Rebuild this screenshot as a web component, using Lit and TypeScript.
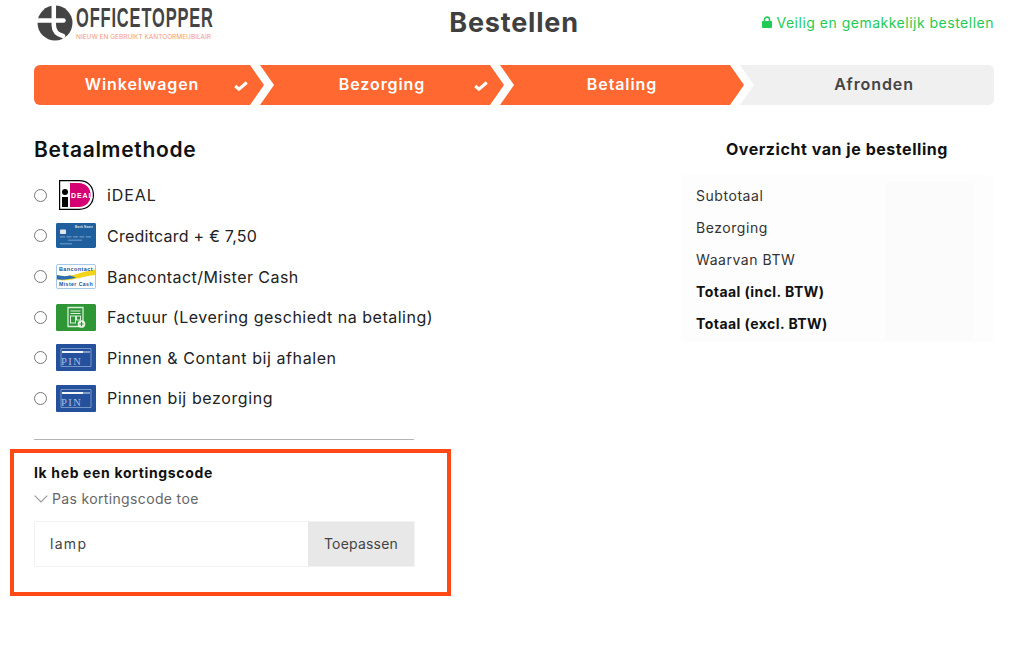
import { LitElement, html, css } from "lit";
import { customElement } from "lit/decorators.js";

const check = html`<svg class="check" viewBox="0 0 14 10"><path d="M1.200 5 5 8.200 12.800 1.500" fill="none" stroke="#fff" stroke-width="3"/></svg>`;

const pin = html`<svg class="pay" viewBox="0 0 40 27"><rect width="40" height="27" rx="1" fill="#24509c"/><path d="M5 4.500h30v18H5z" fill="none" stroke="#8ea7d2" stroke-width=".8"/><rect x="6" y="7" width="21" height="2" fill="#f2f5fb"/><rect x="27" y="7" width="7" height="2" fill="#7f9bcc"/><text x="5" y="20.500" font-family="Liberation Serif" font-size="10.500" letter-spacing="1.500" fill="#a9bce0">PIN</text></svg>`;

const icons = [
  html`<svg class="pay tall" viewBox="0 0 40 30"><path d="M3.600.6H23C32.500.6 37.400 7 37.400 15S32.500 29.400 23 29.400H3.600Z" fill="#fff" stroke="#000" stroke-width="1.200"/><path d="M14 3h8.500C30 3 34.600 8 34.600 15S30 27 22.500 27H14Z" fill="#d50072"/><circle cx="9" cy="12" r="3" fill="#000"/><rect x="6" y="17" width="6" height="10" fill="#000"/><text x="15" y="17.500" font-family="Liberation Sans" font-weight="700" font-size="7" fill="#fff">DEAL</text></svg>`,
  html`<svg class="pay card" viewBox="0 0 40 27" preserveAspectRatio="none"><rect width="40" height="27" rx="1.500" fill="#1f5f9e"/><text x="19" y="5" font-family="Liberation Sans" font-weight="700" font-size="3" fill="#dfeaf5" textLength="18" lengthAdjust="spacingAndGlyphs">Bank Name</text><rect x="4" y="7" width="6" height="5" rx=".8" fill="#dfe6ec"/><path d="M4 15h32" stroke="#7fa6cc" stroke-width="1" stroke-dasharray="5 1.500"/><rect x="12" y="18" width="14" height="1" fill="#7fa6cc"/><rect x="4" y="22" width="12" height="1" fill="#7fa6cc"/></svg>`,
  html`<svg class="pay card" viewBox="0 0 40 27" preserveAspectRatio="none"><rect x=".5" y=".5" width="39" height="26" rx="1.500" fill="#fff" stroke="#9fc6e6"/><path d="M1 12C14 16 25 8 39 6v6C26 13 15 20 1 17Z" fill="#f4d31a"/><path d="M1 12C6 13.500 10 13.500 14 12.500L20 14.500C14 16.500 7 17.500 1 16.500Z" fill="#2a6db5"/><text x="3" y="7.500" font-family="Liberation Sans" font-weight="700" font-size="5.500" fill="#17509a" textLength="34" lengthAdjust="spacingAndGlyphs">Bancontact</text><text x="3" y="23.500" font-family="Liberation Sans" font-weight="700" font-size="5.500" fill="#17509a" textLength="34" lengthAdjust="spacingAndGlyphs">Mister Cash</text></svg>`,
  html`<svg class="pay" viewBox="0 0 40 27"><rect width="40" height="27" rx="1.500" fill="#2e9634"/><path d="M12 3.500h15v19H12z" fill="none" stroke="#d8efd9" stroke-width="1.300"/><path d="M14.500 7h10M14.500 9.500h10" stroke="#d8efd9" stroke-width="1.200"/><rect x="14.500" y="12" width="5" height="7" fill="none" stroke="#d8efd9"/><rect x="20.500" y="12" width="4" height="4" fill="none" stroke="#d8efd9"/><circle cx="25.500" cy="20" r="3.800" fill="#eaf6ea"/><path d="M23.300 20h4.400M25.500 17.800v4.400" stroke="#2e9634" stroke-width="1.100"/></svg>`,
  pin,
  pin,
];

const methods: [string, number][] = [
  ["iDEAL", 0.9],
  ["Creditcard + € 7,50", 0.25],
  ["Bancontact/Mister Cash", 0.45],
  ["Factuur (Levering geschiedt na betaling)", 0.5],
  ["Pinnen & Contant bij afhalen", 0.58],
  ["Pinnen bij bezorging", 0.6],
];

const summary: [string, boolean][] = [
  ["Subtotaal", false],
  ["Bezorging", false],
  ["Waarvan BTW", false],
  ["Totaal (incl. BTW)", true],
  ["Totaal (excl. BTW)", true],
];

@customElement("app-root")
export class AppRoot extends LitElement {
  static styles = css`
    :host {
      display: block;
      width: 1027px;
      height: 652px;
      background: #fff;
      font-family: "Inter", "Liberation Sans", sans-serif;
      color: #222;
      overflow: hidden;
    }
    .page {
      padding: 0 33px 0 34px;
    }
    .top {
      display: grid;
      grid-template-columns: 1fr auto 1fr;
      align-items: center;
      height: 46px;
    }
    .logo {
      display: flex;
      align-items: flex-start;
      gap: 3px;
      padding: 5px 0 0 3px;
      align-self: start;
    }
    .logo svg {
      width: 36px;
      height: 36px;
      flex: none;
    }
    .wordmark {
      display: flex;
      flex-direction: column;
    }
    .wm-big {
      font: 700 24px/27px "Liberation Sans", sans-serif;
      color: #444;
      transform: scale(0.685, 1.130);
      transform-origin: left center;
      white-space: nowrap;
      width: 137px;
      margin-top: -0.800px;
      letter-spacing: 1.250px;
    }
    .wm-small {
      font: 400 6.500px/8px "Inter", sans-serif;
      color: #f79a78;
      white-space: nowrap;
      margin: 2.100px 0 0 0;
    }
    h1 {
      margin: 0;
      font-size: 27px;
      font-weight: 700;
      color: #404040;
      line-height: 46px;
      letter-spacing: 0.800px;
    }
    .safe {
      justify-self: end;
      display: flex;
      align-items: center;
      gap: 4px;
      padding-bottom: 2px;
      font-size: 14px;
      letter-spacing: 0.500px;
      color: #1ecb55;
    }
    .safe svg {
      width: 10px;
      height: 12px;
    }
    .steps {
      margin-top: 19px;
      display: grid;
      grid-template-columns: 216px 240px 240px 1fr;
      height: 40px;
      border-radius: 6px;
      overflow: hidden;
      background: #f0f0f0;
    }
    .step {
      position: relative;
      display: flex;
      align-items: center;
      justify-content: center;
      box-sizing: border-box;
      padding-bottom: 2px;
      font-size: 16px;
      font-weight: 600;
      letter-spacing: 0.900px;
      color: #fff;
      background: #ff6831;
    }
    .step.after {
      padding-left: 24px;
    }
    .step.off {
      background: #f0f0f0;
      color: #444;
    }
    .arrow {
      position: absolute;
      top: 0;
      height: 40px;
      width: 24px;
      right: -24px;
      z-index: 1;
    }
    .check {
      position: absolute;
      width: 14px;
      height: 10px;
      right: 2px;
      top: 16px;
    }
    .cols {
      display: flex;
      justify-content: space-between;
      margin-top: 32px;
    }
    .left {
      width: 380px;
    }
    h2 {
      margin: 0;
      font-size: 21px;
      line-height: 26px;
      font-weight: 600;
      color: #111;
      letter-spacing: 0.700px;
    }
    .methods {
      margin: 12.100px 0 0;
      padding: 0;
      list-style: none;
    }
    .methods li {
      display: flex;
      align-items: center;
      height: 40.600px;
      font-size: 16px;
      color: #222;
      white-space: nowrap;
    }
    input[type="radio"] {
      width: 13px;
      height: 13px;
      margin: 0 9px 0 0;
      flex: none;
    }
    .pay {
      width: 40px;
      height: 27px;
      flex: none;
      margin-right: 11px;
    }
    .pay.tall {
      height: 30px;
    }
    .pay.card {
      height: 25px;
    }
    .rule {
      height: 1px;
      background: #b4b4b4;
      margin-top: 19.900px;
    }
    .coupon {
      margin: 9px 0 0 -24px;
      width: 441px;
      height: 147px;
      box-sizing: border-box;
      border: 4px solid #ff4a17;
      padding: 10px 20px 0;
    }
    .coupon h3 {
      margin: 0;
      font-size: 14px;
      line-height: 20px;
      font-weight: 700;
      color: #111;
      letter-spacing: 0.650px;
    }
    .toggle {
      display: flex;
      align-items: center;
      gap: 4px;
      margin-top: 6px;
      font-size: 14px;
      line-height: 20px;
      color: #666;
      letter-spacing: 0.350px;
    }
    .toggle svg {
      width: 14px;
      height: 8px;
    }
    .field {
      display: flex;
      margin-top: 12px;
      height: 46px;
      width: 381px;
      box-sizing: border-box;
      border: 1px solid #f2f2f2;
    }
    .field .val {
      flex: 1;
      display: flex;
      align-items: center;
      padding-left: 15px;
      font-size: 14px;
      color: #444;
      letter-spacing: 1.300px;
    }
    .field .btn {
      width: 106px;
      display: flex;
      align-items: center;
      justify-content: center;
      background: #e8e8e8;
      font-size: 14px;
      color: #444;
      letter-spacing: 0.200px;
    }
    .right {
      width: 312px;
      margin-right: 1px;
    }
    .right h2 {
      font-size: 16px;
      line-height: 24px;
      font-weight: 700;
      text-align: center;
      color: #111;
      letter-spacing: 0.550px;
    }
    .box {
      margin-top: 14px;
      height: 168px;
      box-sizing: border-box;
      background: #fdfdfd;
      border-radius: 4px;
      padding: 8px 20px 3px 15px;
      display: grid;
      grid-template-columns: 189px 88px;
    }
    .labels {
      font-size: 14px;
      margin-top: -3px;
    }
    .labels div {
      height: 32px;
      line-height: 32px;
      color: #333;
      white-space: nowrap;
      letter-spacing: 0.550px;
    }
    .labels div.b {
      font-weight: 700;
      color: #111;
      letter-spacing: 0.450px;
    }
    .vals {
      background: #fbfbfb;
    }
  `;

  private step(label: string, done: boolean, after: boolean) {
    return html`<div class="step ${after ? "after" : ""}">
      ${label}${done ? check : ""}
      <svg class="arrow" viewBox="0 0 24 40" aria-hidden="true">
        <path d="M0 0H10L24 20 10 40H0Z" fill="#fff"/>
        <path d="M0 0 14 20 0 40Z" fill="#ff6831"/>
      </svg>
    </div>`;
  }

  render() {
    return html`<div class="page">
      <header class="top">
        <div class="logo">
          <svg viewBox="0 0 36 36">
            <circle cx="18" cy="18" r="17.500" fill="#444"/>
            <path d="M0 15.500H26.500" stroke="#fff" stroke-width="4.500" stroke-linecap="round" fill="none"/>
            <path d="M16.800 0V20C16.800 26 20 29.500 26 31" stroke="#fff" stroke-width="4.500" stroke-linecap="round" fill="none"/>
          </svg>
          <div class="wordmark">
            <div class="wm-big">OFFICETOPPER</div>
            <div class="wm-small">NIEUW EN GEBRUIKT KANTOORMEUBILAIR</div>
          </div>
        </div>
        <h1>Bestellen</h1>
        <div class="safe">
          <svg viewBox="0 0 10 12"><path d="M2.500 5.500V3.500a2.500 2.500 0 0 1 5 0v2" fill="none" stroke="#1ecb55" stroke-width="1.500"/><rect y="5" width="10" height="7" rx="1" fill="#1ecb55"/></svg>
          Veilig en gemakkelijk bestellen
        </div>
      </header>

      <nav class="steps">
        ${this.step("Winkelwagen", true, false)}
        ${this.step("Bezorging", true, true)}
        ${this.step("Betaling", false, true)}
        <div class="step off after">Afronden</div>
      </nav>

      <div class="cols">
        <section class="left">
          <h2>Betaalmethode</h2>
          <ul class="methods">
            ${methods.map(
              ([m, ls], i) =>
                html`<li style="letter-spacing:${ls}px"><input type="radio" name="pay" />${icons[i]}${m}</li>`
            )}
          </ul>
          <div class="rule"></div>
          <div class="coupon">
            <h3>Ik heb een kortingscode</h3>
            <div class="toggle">
              <svg viewBox="0 0 14 8"><path d="M.7.7 7 7l6.300-6.300" fill="none" stroke="#999" stroke-width="1.200"/></svg>
              Pas kortingscode toe
            </div>
            <div class="field">
              <div class="val">lamp</div>
              <div class="btn">Toepassen</div>
            </div>
          </div>
        </section>

        <aside class="right">
          <h2>Overzicht van je bestelling</h2>
          <div class="box">
            <div class="labels">
              ${summary.map(([t, b]) => html`<div class=${b ? "b" : ""}>${t}</div>`)}
            </div>
            <div class="vals"></div>
          </div>
        </aside>
      </div>
    </div>`;
  }
}
